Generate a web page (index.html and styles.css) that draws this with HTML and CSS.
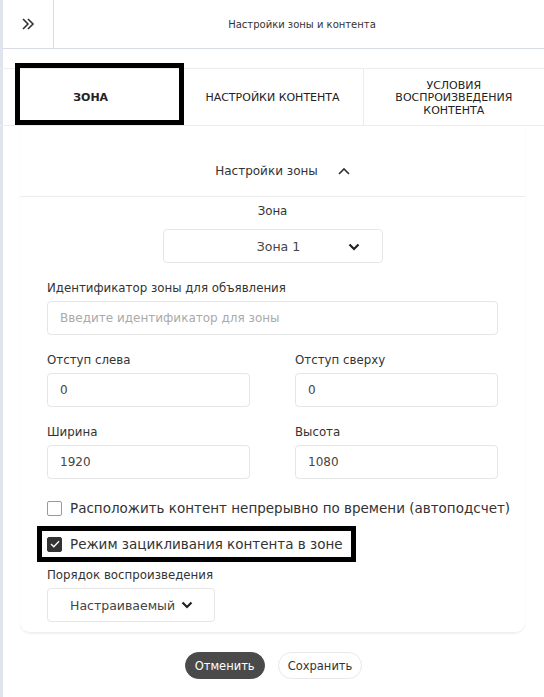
FILE: index.html
```html
<!DOCTYPE html>
<html lang="ru">
<head>
<meta charset="utf-8">
<link rel="stylesheet" href="styles.css">
</head>
<body>
<div class="page">
  <header class="header">
    <div class="collapse">
      <svg width="14" height="14" viewBox="0 0 14 14"><path d="M2 2l5 5-5 5M7 2l5 5-5 5" fill="none" stroke="#333" stroke-width="1.6"/></svg>
    </div>
    <div class="title">Настройки зоны и контента</div>
  </header>

  <nav class="tabs">
    <div class="tab tab-active">ЗОНА</div>
    <div class="tab">НАСТРОЙКИ КОНТЕНТА</div>
    <div class="tab">УСЛОВИЯ<br>ВОСПРОИЗВЕДЕНИЯ<br>КОНТЕНТА</div>
  </nav>

  <section class="card">
    <div class="card-head">
      <span>Настройки зоны</span>
      <svg class="chev-up" width="12" height="8" viewBox="0 0 12 8"><path d="M1 7l5-5 5 5" fill="none" stroke="#333" stroke-width="1.6"/></svg>
    </div>
    <div class="card-body">
      <div class="zone-field">
        <div class="label center">Зона</div>
        <div class="select zone-select">
          <span>Зона 1</span>
          <svg class="chev" width="12" height="8" viewBox="0 0 12 8"><path d="M1.5 1.5l4.5 4.5 4.5-4.5" fill="none" stroke="#222" stroke-width="2.2"/></svg>
        </div>
      </div>

      <div class="field">
        <div class="label">Идентификатор зоны для объявления</div>
        <div class="input placeholder">Введите идентификатор для зоны</div>
      </div>

      <div class="row">
        <div class="field">
          <div class="label">Отступ слева</div>
          <div class="input">0</div>
        </div>
        <div class="field">
          <div class="label">Отступ сверху</div>
          <div class="input">0</div>
        </div>
      </div>

      <div class="row">
        <div class="field">
          <div class="label">Ширина</div>
          <div class="input">1920</div>
        </div>
        <div class="field">
          <div class="label">Высота</div>
          <div class="input">1080</div>
        </div>
      </div>

      <div class="check">
        <span class="box"></span>
        <span>Расположить контент непрерывно по времени (автоподсчет)</span>
      </div>
      <div class="check check-marked">
        <span class="box box-on"><svg width="10" height="8" viewBox="0 0 10 8"><path d="M1 4l2.8 2.8L9 1.2" fill="none" stroke="#fff" stroke-width="1.3"/></svg></span>
        <span>Режим зацикливания контента в зоне</span>
      </div>

      <div class="field order">
        <div class="label">Порядок воспроизведения</div>
        <div class="select order-select">
          <span>Настраиваемый</span>
          <svg class="chev" width="12" height="8" viewBox="0 0 12 8"><path d="M1.5 1.5l4.5 4.5 4.5-4.5" fill="none" stroke="#222" stroke-width="2.2"/></svg>
        </div>
      </div>
    </div>
  </section>

  <div class="actions">
    <button class="btn btn-dark">Отменить</button>
    <button class="btn btn-light">Сохранить</button>
  </div>
</div>
</body>
</html>
```

FILE: styles.css
```css
*, *::before, *::after { box-sizing: border-box; }
html, body { margin: 0; padding: 0; background: #fff; }
body {
  font-family: "DejaVu Sans", sans-serif;
  color: #333;
}
.page {
  width: 544px;
  min-height: 697px;
  border-left: 3px solid #dfe4ef;
}
.header {
  display: flex;
  height: 49px;
  border-bottom: 1px solid #d6dbe7;
}
.collapse {
  width: 51px;
  border-right: 1px solid #d6dbe7;
  display: flex;
  align-items: center;
  justify-content: center;
}
.title {
  flex: 1;
  display: flex;
  align-items: center;
  justify-content: center;
  padding-left: 6px;
  font-size: 10px;
  color: #333;
}
.tabs {
  margin-top: 19px;
  display: grid;
  grid-template-columns: 1fr 1fr 1fr;
  border-top: 1px solid #ececec;
  border-bottom: 1px solid #ececec;
  height: 58px;
  margin-left: -3px;
}
.tab {
  position: relative;
  display: flex;
  align-items: center;
  justify-content: center;
  text-align: center;
  font-size: 11px;
  line-height: 12.5px;
  color: #222;
  border-left: 1px solid #ececec;
  padding-top: 3px;
}
.tab:first-child { border-left: none; }
.tab-active { font-weight: bold; z-index: 1; }
.tab-active::after {
  content: "";
  position: absolute;
  left: 15px;
  top: -6px;
  width: 169px;
  height: 62px;
  border: 5px solid #000;
}
.card {
  margin: 0 19px 0 17px;
  border-radius: 0 0 10px 10px;
  box-shadow: 0 1px 2px rgba(0,0,0,0.06);
  border-bottom: 1px solid #efefef;
}
.card-head {
  height: 71px;
  padding-top: 19px;
  padding-left: 20px;
  display: flex;
  align-items: center;
  justify-content: center;
  gap: 20px;
  font-size: 12px;
  color: #333;
  border-bottom: 1px solid #ececec;
}
.chev-up { margin-top: 1px; }
.card-body {
  padding: 7px 27px 10px 27px;
}
.label {
  font-size: 11.8px;
  color: #333;
  line-height: 15px;
}
.label.center { text-align: center; }
.zone-field {
  display: flex;
  flex-direction: column;
  align-items: center;
}
.select {
  border: 1px solid #e6e6e6;
  border-radius: 4px;
  height: 34px;
  display: flex;
  align-items: center;
  font-size: 12.5px;
  color: #444;
}
.zone-select {
  margin-top: 10px;
  width: 220px;
  position: relative;
  justify-content: center;
  padding-left: 12px;
}
.zone-select .chev {
  position: absolute;
  right: 22px;
  top: 13px;
}
.field { display: flex; flex-direction: column; }
.field .label { margin-bottom: 5px; }
.card-body > .field { margin-top: 18px; }
.input {
  border: 1px solid #e6e6e6;
  border-radius: 4px;
  height: 34px;
  display: flex;
  align-items: center;
  padding-left: 12px;
  font-size: 12px;
  color: #444;
}
.input.placeholder { color: #aaa; }
.row {
  display: grid;
  grid-template-columns: 1fr 1fr;
  column-gap: 45px;
  margin-top: 18px;
}
.check {
  display: flex;
  align-items: center;
  gap: 8px;
  font-size: 13.5px;
  color: #333;
  white-space: nowrap;
  margin-top: 21px;
}
.box {
  flex-shrink: 0;
  width: 15px;
  height: 15px;
  border: 1px solid #999;
  border-radius: 2px;
  display: inline-flex;
  align-items: center;
  justify-content: center;
}
.box-on { background: #333; border-color: #333; }
.check-marked {
  width: fit-content;
  margin-top: 10px;
  margin-left: -10px;
  padding: 5px 8px 5px 5px;
  border: 5px solid #000;
  height: 36px;
}
.card-body > .order { margin-top: 6px; }
.order .label { margin-bottom: 5px; }
.order-select {
  width: 168px;
  padding-left: 22px;
  gap: 6px;
}
.actions {
  display: flex;
  justify-content: center;
  gap: 13px;
  margin-top: 19px;
}
.btn {
  font-family: inherit;
  font-size: 11.5px;
  height: 27px;
  border-radius: 14px;
  padding: 0 9px;
}
.btn-dark {
  background: #4a4a4a;
  color: #fff;
  border: 1px solid #4a4a4a;
}
.btn-light {
  background: #fff;
  color: #333;
  border: 1px solid #e8e8e8;
}
```
